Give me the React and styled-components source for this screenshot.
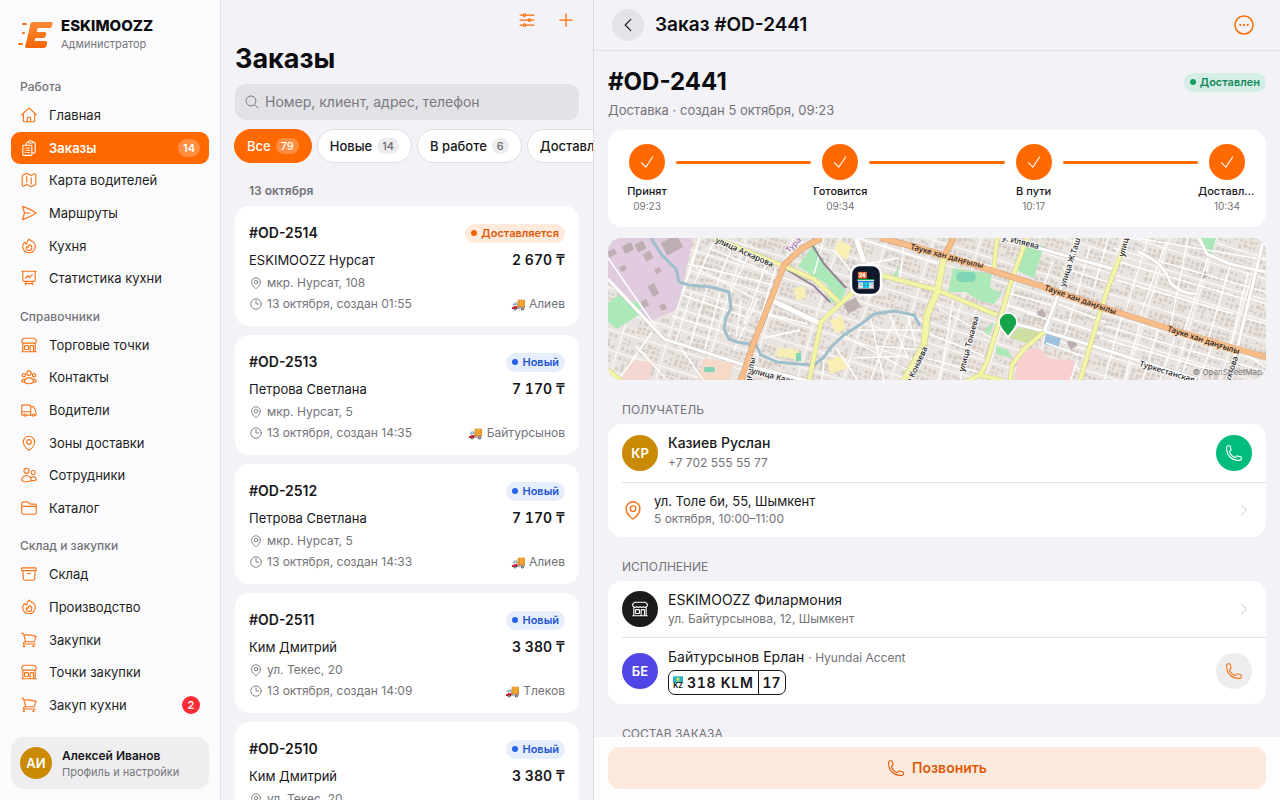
import React from 'react';
import styled, { createGlobalStyle } from 'styled-components';
import {
    HiOutlineHome,
    HiOutlineClipboardDocumentList,
    HiOutlineMap,
    HiOutlinePaperAirplane,
    HiOutlineFire,
    HiOutlinePresentationChartLine,
    HiOutlineBuildingStorefront,
    HiOutlineUserGroup,
    HiOutlineTruck,
    HiOutlineMapPin,
    HiOutlineUsers,
    HiOutlineFolder,
    HiOutlineArchiveBox,
    HiOutlineShoppingCart,
    HiOutlineAdjustmentsHorizontal,
    HiOutlinePlus,
    HiOutlineMagnifyingGlass,
    HiOutlineClock,
    HiOutlineChevronLeft,
    HiOutlineChevronRight,
    HiOutlineEllipsisHorizontalCircle,
    HiOutlineCheck,
    HiOutlinePhone,
} from 'react-icons/hi2';

const navGroups = [
    {
        title: 'Работа',
        items: [
            { label: 'Главная', icon: HiOutlineHome },
            { label: 'Заказы', icon: HiOutlineClipboardDocumentList, count: 14, active: true },
            { label: 'Карта водителей', icon: HiOutlineMap },
            { label: 'Маршруты', icon: HiOutlinePaperAirplane },
            { label: 'Кухня', icon: HiOutlineFire },
            { label: 'Статистика кухни', icon: HiOutlinePresentationChartLine },
        ],
    },
    {
        title: 'Справочники',
        items: [
            { label: 'Торговые точки', icon: HiOutlineBuildingStorefront },
            { label: 'Контакты', icon: HiOutlineUserGroup },
            { label: 'Водители', icon: HiOutlineTruck },
            { label: 'Зоны доставки', icon: HiOutlineMapPin },
            { label: 'Сотрудники', icon: HiOutlineUsers },
            { label: 'Каталог', icon: HiOutlineFolder },
        ],
    },
    {
        title: 'Склад и закупки',
        items: [
            { label: 'Склад', icon: HiOutlineArchiveBox },
            { label: 'Производство', icon: HiOutlineFire },
            { label: 'Закупки', icon: HiOutlineShoppingCart },
            { label: 'Точки закупки', icon: HiOutlineBuildingStorefront },
            { label: 'Закуп кухни', icon: HiOutlineShoppingCart, alert: 2 },
        ],
    },
];

const filters = [
    { label: 'Все', count: 79, active: true },
    { label: 'Новые', count: 14 },
    { label: 'В работе', count: 6 },
    { label: 'Доставлены', count: 59 },
];

const orders = [
    { id: '#OD-2514', status: 'Доставляется', tone: 'orange', client: 'ESKIMOOZZ Нурсат', sum: '2 670 ₸', address: 'мкр. Нурсат, 108', time: '13 октября, создан 01:55', driver: 'Алиев' },
    { id: '#OD-2513', status: 'Новый', tone: 'blue', client: 'Петрова Светлана', sum: '7 170 ₸', address: 'мкр. Нурсат, 5', time: '13 октября, создан 14:35', driver: 'Байтурсынов' },
    { id: '#OD-2512', status: 'Новый', tone: 'blue', client: 'Петрова Светлана', sum: '7 170 ₸', address: 'мкр. Нурсат, 5', time: '13 октября, создан 14:33', driver: 'Алиев' },
    { id: '#OD-2511', status: 'Новый', tone: 'blue', client: 'Ким Дмитрий', sum: '3 380 ₸', address: 'ул. Текес, 20', time: '13 октября, создан 14:09', driver: 'Тлеков' },
    { id: '#OD-2510', status: 'Новый', tone: 'blue', client: 'Ким Дмитрий', sum: '3 380 ₸', address: 'ул. Текес, 20', time: '13 октября, создан 14:05', driver: 'Тлеков' },
];

const steps = [
    { label: 'Принят', time: '09:23' },
    { label: 'Готовится', time: '09:34' },
    { label: 'В пути', time: '10:17' },
    { label: 'Доставлен', time: '10:34' },
];

const tones = {
    orange: { bg: '#ffeadb', text: '#dd5b0b', dot: '#f56200' },
    blue: { bg: '#e6eefc', text: '#2257d3', dot: '#2563eb' },
    green: { bg: '#d5eee5', text: '#128a5c', dot: '#16a05f' },
};

const StatusBadge = ({ tone, children }) => (
    <Badge $tone={tones[tone]}>
        <i />
        {children}
    </Badge>
);

const Logo = () => (
    <svg width="36" height="28" viewBox="0 0 36 28" aria-hidden="true">
        <defs>
            <linearGradient id="logoFill" gradientUnits="userSpaceOnUse" x1="0" y1="0" x2="0" y2="26">
                <stop offset="0" stopColor="#ff8a33" />
                <stop offset="1" stopColor="#f56408" />
            </linearGradient>
        </defs>
        <g transform="translate(7 1) skewX(-13)" fill="url(#logoFill)">
            <rect x="7" y="0" width="8" height="26" rx="2" />
            <rect x="7" y="0" width="22" height="6" rx="2" />
            <rect x="7" y="10" width="18" height="6" rx="2" />
            <rect x="7" y="19" width="21" height="7" rx="2" />
        </g>
        <g fill="#f97316">
            <rect x="5" y="2" width="5" height="2" rx="1" />
            <rect x="5" y="11" width="3" height="2" rx="1" />
            <rect x="1" y="22" width="5" height="2" rx="1" />
        </g>
    </svg>
);

const Sidebar = () => (
    <SidebarBox>
        <Brand>
            <Logo />
            <div>
                <BrandName>ESKIMOOZZ</BrandName>
                <BrandRole>Администратор</BrandRole>
            </div>
        </Brand>
        <Nav>
            {navGroups.map(group => (
                <NavGroup key={group.title} $rows={group.items.length}>
                    <NavTitle>{group.title}</NavTitle>
                    {group.items.map(({ label, icon: Icon, count, alert, active }) => (
                        <NavItem href="#" key={label} $active={active}>
                            <Icon />
                            <span>{label}</span>
                            {count && <NavCount>{count}</NavCount>}
                            {alert && <NavAlert>{alert}</NavAlert>}
                        </NavItem>
                    ))}
                </NavGroup>
            ))}
        </Nav>
        <Profile type="button">
            <Avatar $size={32} $color="#ca8a04">АИ</Avatar>
            <span>
                <ProfileName>Алексей Иванов</ProfileName>
                <ProfileNote>Профиль и настройки</ProfileNote>
            </span>
        </Profile>
    </SidebarBox>
);

const OrderCard = ({ order }) => (
    <Card href="#">
        <CardTop>
            <OrderId>{order.id}</OrderId>
            <StatusBadge tone={order.tone}>{order.status}</StatusBadge>
        </CardTop>
        <CardRow>
            <Client>{order.client}</Client>
            <Sum>{order.sum}</Sum>
        </CardRow>
        <CardMeta>
            <span><HiOutlineMapPin />{order.address}</span>
        </CardMeta>
        <CardMeta>
            <span><HiOutlineClock />{order.time}</span>
            <span>🚚 {order.driver}</span>
        </CardMeta>
    </Card>
);

const OrderList = () => (
    <ListBox>
        <ListActions>
            <IconButton type="button" aria-label="Фильтры"><HiOutlineAdjustmentsHorizontal /></IconButton>
            <IconButton type="button" aria-label="Новый заказ"><HiOutlinePlus /></IconButton>
        </ListActions>
        <ListTitle>Заказы</ListTitle>
        <Search>
            <HiOutlineMagnifyingGlass />
            <input type="search" aria-label="Поиск" placeholder="Номер, клиент, адрес, телефон" />
        </Search>
        <Chips>
            {filters.map(f => (
                <Chip type="button" key={f.label} $active={f.active}>
                    {f.label}
                    <span>{f.count}</span>
                </Chip>
            ))}
        </Chips>
        <DayLabel>13 октября</DayLabel>
        <Cards>
            {orders.map(order => <OrderCard order={order} key={order.id} />)}
        </Cards>
    </ListBox>
);

// repeatable noise for the small houses on the map
const noise = n => {
    const v = Math.sin(n * 127.1) * 43758.5453;
    return v - Math.floor(v);
};

const houses = [];
const lanes = [];
for (let row = 0; row < 66; row++) {
    const y = row * 5 - 190;
    if (row % 4 === 3) {
        lanes.push(`M0 ${y + 2} H720`);
        continue;
    }
    for (let col = 0; col < 144; col++) {
        const n = row * 144 + col;
        if (col % 9 === 8 || noise(n) < 0.15) continue;
        houses.push(
            <rect
                key={n}
                x={col * 5}
                y={y + Math.round(noise(n + 3))}
                width={2 + Math.round(noise(n + 1) * 2)}
                height={2 + Math.round(noise(n + 2) * 2)}
            />
        );
    }
}
for (let col = 8; col < 144; col += 9) {
    lanes.push(`M${col * 5 + 2} -190 V140`);
}

const blockBuildings = [
    [0, 12, 8, 6], [15, 6, 10, 8], [28, 4, 9, 9], [36, 14, 8, 8], [55, 0, 18, 14], [42, 46, 7, 12],
    [34, 62, 6, 7], [52, 66, 6, 6], [47, 30, 6, 5], [12, 28, 6, 5], [237, 62, 14, 11], [460, 102, 8, 8], [593, 34, 6, 6], [430, 72, 7, 8],
];

const smallStreets = [
    'M0 20 L56 101', 'M80 26 L170 48', 'M75 57 L140 80', 'M64 78 L122 96', 'M84 54 L68 103', 'M99 50 L82 108', 'M112 54 L97 112', 'M92 0 L74 57',
    'M106 4 L86 46', 'M124 10 L108 48', 'M141 16 L122 56', 'M158 26 L136 86', 'M168 30 L148 94', 'M100 10 L160 34', 'M88 30 L146 60',
    'M133 62 L128 100', 'M150 60 L126 112', 'M216 0 L206 36', 'M226 12 L252 44', 'M258 26 L290 20', 'M292 40 L296 5', 'M250 0 L330 26',
    'M236 98 L300 132', 'M228 110 L250 143', 'M262 78 L276 143', 'M280 74 L300 120', 'M250 92 L318 92', 'M268 108 L316 112', 'M286 82 L262 143',
    'M246 120 L300 118', 'M300 78 L308 108', 'M216 122 L214 143', 'M330 70 L384 100', 'M322 96 L376 118', 'M318 120 L370 134', 'M345 62 L332 143',
    'M368 72 L352 143', 'M355 20 L388 30', 'M400 55 L446 68', 'M396 66 L440 82', 'M445 22 L436 48', 'M462 19 L450 56', 'M482 8 L468 60',
    'M500 0 L486 50', 'M455 30 L506 46', 'M450 66 L498 84', 'M468 62 L456 100', 'M444 80 L494 96', 'M438 105 L480 120', 'M470 122 L462 143',
    'M505 10 L658 54', 'M512 24 L640 62', 'M508 42 L626 76', 'M528 0 L658 22', 'M540 0 L516 78', 'M558 4 L530 84', 'M580 0 L562 90', 'M600 20 L576 94',
    'M622 28 L600 102', 'M640 34 L622 110', 'M498 88 L622 124', 'M492 100 L618 136', 'M514 78 L496 143', 'M532 86 L516 143', 'M550 92 L534 143',
    'M568 96 L552 143', 'M586 102 L572 143', 'M604 108 L590 143', 'M632 112 L658 130', 'M640 60 L658 66', 'M636 80 L658 86', 'M625 124 L658 134',
    'M28 108 L60 143', 'M70 106 L96 143', 'M44 94 L10 143', 'M200 86 L160 76', 'M192 92 L156 100',
];

const mapLabels = [
    { x: 107, y: 4, angle: 24, text: 'улица Аскарова' },
    { x: 181, y: 15, angle: -45, text: 'Тура', fill: '#9a6aa8' },
    { x: 142, y: 146, angle: -78, text: 'ңғылы' },
    { x: 143, y: 135, angle: 15, text: 'улица Кала…' },
    { x: 303, y: 146, angle: -65, text: 'а Конаева' },
    { x: 302, y: 11, angle: 15, text: 'Тауке хан даңғылы', bold: true },
    { x: 394, y: 2, angle: 14, text: 'у. Иляева' },
    { x: 457, y: 49, angle: -72, text: 'улица Ж.Ташенова' },
    { x: 516, y: 19, angle: -76, text: 'улица' },
    { x: 436, y: 52, angle: 19, text: 'Тауке хан даңғылы', bold: true },
    { x: 559, y: 93, angle: 18, text: 'Тауке хан даңғылы', bold: true },
    { x: 356, y: 134, angle: -75, text: 'улица Токаева' },
    { x: 531, y: 128, angle: 17, text: 'Туркестанская у.' },
    { x: 622, y: 144, angle: -72, text: 'ухтова' },
];

const MapView = () => (
    <MapBox>
        <svg viewBox="0 0 658 142" preserveAspectRatio="xMidYMid slice" role="img" aria-label="Карта доставки">
            <rect width="658" height="142" fill="#e9e4df" />
            <g transform="rotate(17)">
                <g fill="#d6ccc6">{houses}</g>
                <path d={lanes.join(' ')} fill="none" stroke="#fbfaf8" strokeWidth="1.2" />
            </g>

            <polygon points="0,0 85,0 80,24 75,49 68,72 41,84 28,66 0,41" fill="#e0cbdf" />
            <g fill="#bdaeb2">
                {blockBuildings.map(([x, y, w, h]) => (
                    <rect key={`${x}-${y}`} x={x} y={y} width={w} height={h} transform={`rotate(-28 ${x + w / 2} ${y + h / 2})`} />
                ))}
            </g>
            <g fill="#ade9b8">
                <polygon points="11,57 33,66 31,77 9,91 0,84 0,65" />
                <polygon points="206,6 216,26 236,50 230,62 218,46 190,28" />
                <polygon points="229,44 238,52 232,66 220,63" />
                <polygon points="416,4 436,8 426,40 408,32" />
                <polygon points="345,30 384,36 382,50 394,55 386,66 370,62 358,54 340,54" />
                <polygon points="591,0 608,0 604,17 599,16" />
                <polygon points="284,38 290,30 290,42" />
                <polygon points="380,88 386,84 382,96 376,94" />
                <polygon points="388,108 400,112 404,120 388,116" />
            </g>
            <polygon points="409,124 421,111 432,111 442,121 466,122 464,143 407,143" fill="#f9cfd0" />
            <polygon points="409,90 436,92 422,106 402,100" fill="#cde0a2" />
            <polygon points="96,120 126,126 120,143 90,143" fill="#f6d9c6" />
            <polygon points="26,122 46,124 40,143 10,143" fill="#f4d7d2" />
            <polygon points="438,95 454,97 450,110 436,106" fill="#9fc3de" />
            <g fill="#f8efb5">
                <polygon points="186,50 196,48 198,60 188,62" />
                <polygon points="230,2 244,8 238,22 226,14" />
                <polygon points="170,110 190,112 192,122 168,118" />
                <polygon points="222,82 234,78 238,90 228,96" />
                <polygon points="219,122 234,118 240,130 222,136" />
            </g>
            <g fill="#7fd6b4">
                <rect x="348" y="34" width="20" height="10" rx="5" />
                <rect x="96" y="129" width="11" height="5" rx="2" />
                <rect x="188" y="115" width="5" height="8" />
            </g>

            <g fill="none" stroke="#fff" strokeWidth="1.4">
                {smallStreets.map(d => <path key={d} d={d} />)}
            </g>
            <path d="M530 14 Q556 24 562 44 Q572 56 590 56" fill="none" stroke="#cfcac4" strokeWidth="4" />
            <path d="M530 14 Q556 24 562 44 Q572 56 590 56" fill="none" stroke="#fff" strokeWidth="3" />
            <path
                d="M43 0 L53 16 L68 31 L71 44 L81 47 L103 49 L121 54 L123 71 L118 79 L116 91 L121 101 L129 104 L148 107 L153 117 L169 124 L189 126 L206 127 L216 119 L223 109 L236 97 L253 86 L266 76 L286 73 L306 77 L312 88"
                fill="none" stroke="#9fbfcd" strokeWidth="3" strokeLinejoin="round"
            />
            <path d="M203 5 L216 26 L238 50 M176 30 L206 48 L222 64" fill="none" stroke="#8f8497" strokeWidth="2" />

            {/* main streets: casing first, then the fill */}
            {[['#cfcac4', 1], ['#fff', 0]].map(([stroke, extra]) => (
                <g key={stroke} fill="none" stroke={stroke} strokeWidth={3 + extra}>
                    <path d="M0 41 L56 101 L133 126 L200 143" />
                    <path d="M395 0 L462 19 L509 32" />
                    <path d="M472 0 L436 94" />
                    <path d="M656 0 L629 111 L619 143" />
                    <path d="M591 0 L599 16 L622 26 L658 34" />
                    <path d="M389 81 L439 94 L479 106 L529 122 L589 141" />
                    <path d="M163 62 L213 86 M248 0 L256 24" strokeWidth={5 + extra} />
                </g>
            ))}
            {[['#cfc993', 1], ['#f2f5a6', 0]].map(([stroke, extra]) => (
                <g key={stroke} fill="none" stroke={stroke} strokeWidth={4 + extra} strokeLinejoin="round">
                    <path d="M106 0 L136 12 L173 27 L206 41 L231 64" />
                    <path d="M201 143 L213 84 L243 56 L260 36 L276 38 L329 52 L389 77" />
                    <path d="M336 20 L329 54 L319 77 L316 107 L296 143" strokeWidth={6 + extra} />
                    <path d="M419 0 L404 41 L391 84 L379 124 L372 137 L359 143 M372 137 L396 143" />
                    <path d="M402 143 L404 127 L416 111 L436 94" />
                    <path d="M519 0 L501 47 L489 84 L472 143" />
                    <path d="M389 0 L386 30" />
                    <path d="M0 132 L13 143" />
                </g>
            ))}
            {[['#cf9a6c', 1], ['#f8bd88', 0]].map(([stroke, extra]) => (
                <g key={stroke} fill="none" stroke={stroke} strokeWidth={5 + extra} strokeLinejoin="round">
                    <path d="M133 143 L146 104 L163 61 L176 27 L193 11 L213 0" />
                    <path d="M273 0 L329 15 L379 31 L436 49 L509 74 L562 91 L629 111 L658 119" />
                    <path d="M346 0 L337 16" />
                </g>
            ))}

            <g fontFamily="'Noto Sans', sans-serif" fontSize="8" fontWeight="500" strokeOpacity="0.7" strokeWidth="2" paintOrder="stroke">
                {mapLabels.map(l => (
                    <text
                        key={`${l.text}${l.x}`}
                        x={l.x}
                        y={l.y}
                        fill={l.fill || '#222'}
                        stroke={l.bold ? '#f8bd88' : '#fff'}
                        transform={`rotate(${l.angle} ${l.x} ${l.y})`}
                    >
                        {l.text}
                    </text>
                ))}
            </g>

            <path d="M400 99 C396 93 391 90 391 84 A9 9 0 0 1 409 84 C409 90 404 93 400 99 Z" fill="#16a34a" stroke="#fff" strokeWidth="1.6" />
            <rect x="243" y="27" width="30" height="30" rx="9" fill="#0f172a" stroke="#fff" strokeWidth="2.4" />
            <text x="258" y="48" fontSize="16" textAnchor="middle">🏪</text>
        </svg>
        <MapCredit href="#">© OpenStreetMap</MapCredit>
    </MapBox>
);

const OrderDetail = () => (
    <DetailBox>
        <DetailHeader>
            <BackButton type="button" aria-label="Назад"><HiOutlineChevronLeft /></BackButton>
            <h2>Заказ #OD-2441</h2>
            <IconButton type="button" aria-label="Ещё" $big><HiOutlineEllipsisHorizontalCircle /></IconButton>
        </DetailHeader>
        <DetailBody>
            <Summary>
                <h1>#OD-2441</h1>
                <StatusBadge tone="green">Доставлен</StatusBadge>
            </Summary>
            <SummaryNote>Доставка · создан 5 октября, 09:23</SummaryNote>
            <Stepper>
                {steps.map((step, i) => (
                    <React.Fragment key={step.label}>
                        {i > 0 && <StepLine />}
                        <Step>
                            <StepMark><HiOutlineCheck /></StepMark>
                            <StepLabel>{step.label}</StepLabel>
                            <StepTime>{step.time}</StepTime>
                        </Step>
                    </React.Fragment>
                ))}
            </Stepper>
            <MapView />

            <SectionTitle>Получатель</SectionTitle>
            <Panel>
                <PanelRow>
                    <Avatar $size={36} $color="#ca8a04">КР</Avatar>
                    <RowText>
                        <RowTitle $strong>Казиев Руслан</RowTitle>
                        <RowPhone>+7 702 555 55 77</RowPhone>
                    </RowText>
                    <CallButton type="button" aria-label="Позвонить получателю" $filled><HiOutlinePhone /></CallButton>
                </PanelRow>
                <PanelRow>
                    <HiOutlineMapPin />
                    <RowText>
                        <RowTitle $small>ул. Толе би, 55, Шымкент</RowTitle>
                        <RowNote>5 октября, 10:00–11:00</RowNote>
                    </RowText>
                    <Chevron />
                </PanelRow>
            </Panel>

            <SectionTitle>Исполнение</SectionTitle>
            <Panel>
                <PanelRow>
                    <Avatar $size={36} $color="#1a1a1c"><HiOutlineBuildingStorefront /></Avatar>
                    <RowText>
                        <RowTitle>ESKIMOOZZ Филармония</RowTitle>
                        <RowNote>ул. Байтурсынова, 12, Шымкент</RowNote>
                    </RowText>
                    <Chevron />
                </PanelRow>
                <PanelRow>
                    <Avatar $size={36} $color="#4f46e5">БЕ</Avatar>
                    <RowText>
                        <RowTitle>Байтурсынов Ерлан <small>· Hyundai Accent</small></RowTitle>
                        <Plate>
                            <PlateFlag>
                                <svg width="10" height="7" viewBox="0 0 11 7" aria-hidden="true">
                                    <rect width="11" height="7" fill="#1fb5c9" />
                                    <circle cx="5.5" cy="3" r="1.6" fill="#f8d648" />
                                    <path d="M3 4.5 Q5.5 6.5 8 4.5" stroke="#f8d648" strokeWidth="0.8" fill="none" />
                                </svg>
                                KZ
                            </PlateFlag>
                            <PlateNumber>318 KLM</PlateNumber>
                            <PlateRegion>17</PlateRegion>
                        </Plate>
                    </RowText>
                    <CallButton type="button" aria-label="Позвонить водителю"><HiOutlinePhone /></CallButton>
                </PanelRow>
            </Panel>

            <SectionTitle>Состав заказа</SectionTitle>
        </DetailBody>
        <DetailFooter>
            <PrimaryCall type="button"><HiOutlinePhone />Позвонить</PrimaryCall>
        </DetailFooter>
    </DetailBox>
);

const App = () => (
    <>
        <GlobalStyle />
        <Page>
            <Sidebar />
            <OrderList />
            <OrderDetail />
        </Page>
    </>
);

export default App;

const GlobalStyle = createGlobalStyle`
    * {
        box-sizing: border-box;
    }
    body {
        margin: 0;
        background: #f2f2f7;
        color: #18181b;
        font-family: Inter, 'Liberation Sans', sans-serif;
        font-size: 13px;
        line-height: 20px;
    }
    h1, h2, h3, p {
        margin: 0;
    }
    a {
        color: inherit;
        text-decoration: none;
    }
    button, input {
        font: inherit;
        color: inherit;
        border: none;
        padding: 0;
    }
    button {
        cursor: pointer;
    }
    svg {
        flex-shrink: 0;
    }
`

const Page = styled.div`
    display: flex;
    height: 100vh;
    overflow: hidden;
`

const SidebarBox = styled.aside`
    display: flex;
    flex-direction: column;
    flex: 0 0 221px;
    padding: 17px 11px 11px;
    background: #fbfbfd;
    border-right: 1px solid #e0e0e6;
`

const Brand = styled.div`
    display: flex;
    align-items: center;
    gap: 8px;
    padding: 0 6px;
`

const BrandName = styled.div`
    font-size: 15px;
    font-weight: 800;
    line-height: 18px;
    color: #0c0c10;
`

const BrandRole = styled.div`
    font-size: 11px;
    line-height: 18px;
    color: #77777c;
`

const Nav = styled.nav`
    display: flex;
    flex: 1;
    flex-direction: column;
    gap: 13px;
    min-height: 0;
    padding: 25px 0 16px;
`

const NavGroup = styled.div`
    display: flex;
    flex: ${p => p.$rows} 0 auto;
    flex-direction: column;
`

const NavTitle = styled.h3`
    padding: 0 9px 3px;
    font-size: 12px;
    font-weight: 500;
    line-height: 18px;
    color: #737378;
`

const NavItem = styled.a`
    display: flex;
    flex: 1 0 32px;
    align-items: center;
    gap: 11px;
    padding: 0 9px;
    border-radius: 9px;
    font-weight: ${p => (p.$active ? 600 : 400)};
    color: ${p => (p.$active ? '#fff' : '#1f1f23')};
    background: ${p => (p.$active ? '#ff6900' : 'transparent')};
    svg {
        width: 18px;
        height: 18px;
        color: ${p => (p.$active ? '#fff' : '#f97316')};
    }
    span:nth-child(2) {
        flex: 1;
    }
`

const NavCount = styled.span`
    padding: 0 5px;
    border-radius: 9px;
    font-size: 11px;
    line-height: 18px;
    background: rgba(255, 255, 255, 0.25);
`

const NavAlert = styled.span`
    width: 18px;
    border-radius: 9px;
    font-size: 11px;
    font-weight: 600;
    line-height: 18px;
    text-align: center;
    color: #fff;
    background: #fb2c36;
`

const Profile = styled.button`
    display: flex;
    align-items: center;
    gap: 10px;
    height: 52px;
    padding: 0 9px;
    border-radius: 13px;
    background: #eeeef0;
    text-align: left;
`

const ProfileName = styled.span`
    display: block;
    font-size: 12px;
    font-weight: 600;
    line-height: 17px;
`

const ProfileNote = styled.span`
    display: block;
    font-size: 11px;
    line-height: 16px;
    color: #77777c;
`

const Avatar = styled.span`
    display: flex;
    flex-shrink: 0;
    align-items: center;
    justify-content: center;
    width: ${p => p.$size}px;
    height: ${p => p.$size}px;
    border-radius: 50%;
    font-size: 13px;
    font-weight: 600;
    color: #fff;
    background: ${p => p.$color};
    svg {
        width: 18px;
        height: 18px;
    }
`

const ListBox = styled.section`
    display: flex;
    flex-direction: column;
    flex: 0 0 373px;
    min-width: 0;
    padding: 0 14px;
    border-right: 1px solid #dcdce2;
`

const ListActions = styled.div`
    display: flex;
    justify-content: flex-end;
    gap: 3px;
    height: 40px;
    margin-right: -5px;
`

const IconButton = styled.button`
    display: flex;
    align-items: center;
    justify-content: center;
    width: 36px;
    height: 40px;
    color: #ff6900;
    background: none;
    svg {
        width: ${p => (p.$big ? 24 : 20)}px;
        height: ${p => (p.$big ? 24 : 20)}px;
    }
`

const ListTitle = styled.h1`
    font-size: 27px;
    font-weight: 700;
    line-height: 38px;
    color: #0c0c10;
`

const Search = styled.label`
    display: flex;
    align-items: center;
    gap: 5px;
    height: 36px;
    margin-top: 6px;
    padding: 0 9px;
    border-radius: 11px;
    background: #e2e2e7;
    color: #7a7a80;
    svg {
        width: 16px;
        height: 16px;
    }
    input {
        flex: 1;
        min-width: 0;
        background: none;
        outline: none;
        font-size: 14px;
    }
    input::placeholder {
        color: #7a7a80;
    }
`

const Chips = styled.div`
    display: flex;
    gap: 5px;
    margin: 9px -14px 0;
    padding-left: 13px;
    overflow: hidden;
`

const Chip = styled.button`
    display: flex;
    flex-shrink: 0;
    align-items: center;
    gap: 5px;
    height: 34px;
    padding: 0 12px;
    border: 1px solid ${p => (p.$active ? '#ff6900' : '#dedee4')};
    border-radius: 17px;
    font-weight: 500;
    color: ${p => (p.$active ? '#fff' : '#18181b')};
    background: ${p => (p.$active ? '#ff6900' : '#fff')};
    span {
        padding: 0 5px;
        border-radius: 8px;
        font-size: 11px;
        line-height: 16px;
        color: ${p => (p.$active ? '#fff' : '#6a6a70')};
        background: ${p => (p.$active ? 'rgba(255, 255, 255, 0.25)' : '#ededf0')};
    }
`

const DayLabel = styled.h3`
    margin-top: 18px;
    padding: 0 14px;
    font-size: 12px;
    font-weight: 600;
    line-height: 20px;
    color: #737378;
`

const Cards = styled.div`
    display: flex;
    flex: 1;
    flex-direction: column;
    gap: 9px;
    min-height: 0;
    margin-top: 5px;
    overflow: hidden;
`

const Card = styled.a`
    flex-shrink: 0;
    padding: 14px;
    border-radius: 14px;
    background: #fff;
`

const CardRow = styled.div`
    display: flex;
    align-items: center;
    justify-content: space-between;
    height: 28px;
`

const CardTop = styled(CardRow)`
    height: 26px;
`

const OrderId = styled.span`
    font-size: 14px;
    font-weight: 600;
`

const Client = styled.span`
    font-size: 13px;
`

const Sum = styled.span`
    font-size: 14px;
    font-weight: 600;
    font-variant-numeric: tabular-nums;
`

const CardMeta = styled.div`
    display: flex;
    justify-content: space-between;
    height: 17px;
    font-size: 12px;
    line-height: 17px;
    color: #737378;
    & + & {
        margin-top: 4px;
    }
    span {
        display: flex;
        align-items: center;
        gap: 4px;
    }
    svg {
        width: 14px;
        height: 14px;
    }
`

const Badge = styled.span`
    display: flex;
    align-items: center;
    gap: 4px;
    padding: 0 6px;
    border-radius: 10px;
    font-size: 11px;
    font-weight: 600;
    line-height: 19px;
    color: ${p => p.$tone.text};
    background: ${p => p.$tone.bg};
    i {
        width: 6px;
        height: 6px;
        border-radius: 50%;
        background: ${p => p.$tone.dot};
    }
`

const DetailBox = styled.main`
    display: flex;
    flex: 1;
    flex-direction: column;
    min-width: 0;
`

const DetailHeader = styled.header`
    display: flex;
    flex-shrink: 0;
    align-items: center;
    gap: 11px;
    height: 51px;
    padding: 0 18px;
    border-bottom: 1px solid #dfdfe5;
    h2 {
        flex: 1;
        font-size: 19px;
        font-weight: 600;
        color: #0c0c10;
    }
`

const BackButton = styled.button`
    display: flex;
    align-items: center;
    justify-content: center;
    width: 32px;
    height: 32px;
    border-radius: 50%;
    background: #e3e3e8;
    svg {
        width: 18px;
        height: 18px;
    }
`

const DetailBody = styled.div`
    flex: 1;
    min-height: 0;
    padding: 14px 14px 0;
    overflow: hidden;
`

const Summary = styled.div`
    display: flex;
    align-items: center;
    justify-content: space-between;
    h1 {
        font-size: 24px;
        font-weight: 700;
        line-height: 34px;
        color: #0c0c10;
    }
`

const SummaryNote = styled.p`
    margin-top: 1px;
    font-size: 13px;
    color: #737378;
`

const Stepper = styled.div`
    display: flex;
    margin-top: 10px;
    padding: 14px 10px;
    border-radius: 14px;
    background: #fff;
`

const Step = styled.div`
    display: flex;
    flex: 0 0 58px;
    flex-direction: column;
    align-items: center;
    min-width: 0;
`

const StepMark = styled.div`
    display: flex;
    align-items: center;
    justify-content: center;
    width: 36px;
    height: 36px;
    margin-bottom: 4px;
    border-radius: 50%;
    color: #fff;
    background: #ff6900;
    svg {
        width: 18px;
        height: 18px;
    }
`

const StepLabel = styled.div`
    max-width: 100%;
    overflow: hidden;
    font-size: 11px;
    font-weight: 500;
    line-height: 15px;
    text-overflow: ellipsis;
    white-space: nowrap;
`

const StepTime = styled.div`
    font-size: 10px;
    line-height: 14px;
    color: #737378;
`

const StepLine = styled.div`
    flex: 1;
    height: 3px;
    margin-top: 17px;
    border-radius: 2px;
    background: #ff6900;
`

const MapBox = styled.div`
    position: relative;
    height: 142px;
    margin-top: 11px;
    border-radius: 14px;
    overflow: hidden;
    svg {
        display: block;
        width: 100%;
        height: 100%;
    }
`

const MapCredit = styled.a`
    position: absolute;
    right: 4px;
    bottom: 2px;
    font-size: 8px;
    line-height: 11px;
    color: #7c7c80;
`

const SectionTitle = styled.h3`
    margin-top: 20px;
    padding: 0 14px 4px;
    font-size: 12px;
    font-weight: 400;
    line-height: 20px;
    text-transform: uppercase;
    color: #737378;
`

const Panel = styled.div`
    border-radius: 14px;
    background: #fff;
`

const PanelRow = styled.div`
    display: flex;
    align-items: center;
    gap: 10px;
    margin-left: 14px;
    padding: 9px 14px 9px 0;
    & + & {
        border-top: 1px solid #e2e2e6;
    }
    > svg {
        width: 22px;
        height: 22px;
        color: #f97316;
    }
`

const RowText = styled.div`
    flex: 1;
    min-width: 0;
`

const RowTitle = styled.div`
    font-size: ${p => (p.$small ? 13 : 14)}px;
    font-weight: ${p => (p.$strong ? 500 : 400)};
    line-height: ${p => (p.$small ? 18 : 20)}px;
    small {
        font-size: 12px;
        color: #737378;
    }
`

const RowPhone = styled.div`
    font-size: 12px;
    line-height: 20px;
    color: #737378;
`

const RowNote = styled.div`
    font-size: 12px;
    line-height: 18px;
    color: #737378;
`

const Chevron = styled(HiOutlineChevronRight)`
    && {
        width: 16px;
        height: 16px;
        color: #c6c6ca;
    }
`

const CallButton = styled.button`
    display: flex;
    align-items: center;
    justify-content: center;
    width: 36px;
    height: 36px;
    border-radius: 50%;
    color: ${p => (p.$filled ? '#fff' : '#f97316')};
    background: ${p => (p.$filled ? '#00bc7d' : '#ededf0')};
    svg {
        width: 18px;
        height: 18px;
    }
`

const Plate = styled.div`
    display: flex;
    width: fit-content;
    height: 25px;
    margin-top: 2px;
    border: 1px solid #18181b;
    border-radius: 7px;
    font-size: 14px;
    font-weight: 600;
    line-height: 23px;
    font-variant-numeric: tabular-nums;
`

const PlateFlag = styled.span`
    display: flex;
    flex-direction: column;
    align-items: center;
    justify-content: center;
    padding: 0 4px;
    font-size: 7px;
    font-weight: 700;
    line-height: 6px;
`

const PlateNumber = styled.span`
    padding-right: 4px;
    letter-spacing: 0.05em;
`

const PlateRegion = styled.span`
    padding: 0 4px;
    border-left: 1px solid #18181b;
`

const DetailFooter = styled.footer`
    flex-shrink: 0;
    padding: 10px 14px 11px;
    background: #fdfdfe;
`

const PrimaryCall = styled.button`
    display: flex;
    align-items: center;
    justify-content: center;
    gap: 7px;
    width: 100%;
    height: 42px;
    border-radius: 11px;
    font-size: 14px;
    font-weight: 600;
    color: #dd5b0b;
    background: #fdeade;
    svg {
        width: 18px;
        height: 18px;
    }
`
